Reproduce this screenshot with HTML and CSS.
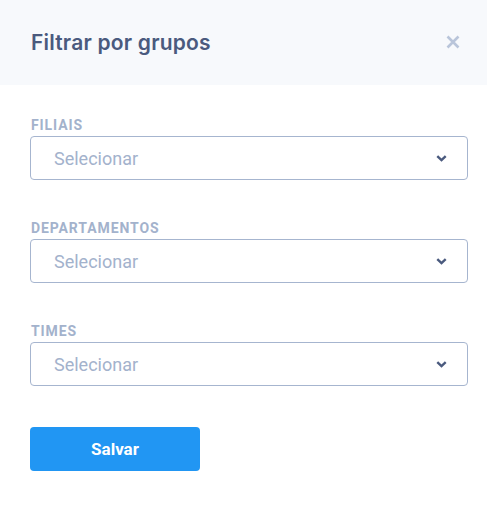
FILE: index.html
```html
<!DOCTYPE html>
<html>
<head>
<meta charset="utf-8">
<link rel="stylesheet" href="styles.css">
</head>
<body>
<div class="modal">
  <div class="header">
    <h2 class="title">Filtrar por grupos</h2>
    <svg class="close" width="14" height="14" viewBox="0 0 14 14"><path d="M1.5 1.5L12.5 12.5M12.5 1.5L1.5 12.5" stroke="#b9c5da" stroke-width="2.6" stroke-linecap="butt"/></svg>
  </div>
  <div class="form">
    <div class="field">
      <label class="label">FILIAIS</label>
      <div class="select"><span class="placeholder">Selecionar</span>
        <svg class="chev" width="11" height="7" viewBox="0 0 11 7"><path d="M1.3 1.2L5.5 5.2L9.7 1.2" fill="none" stroke="#4a5a7e" stroke-width="2.4"/></svg>
      </div>
    </div>
    <div class="field">
      <label class="label">DEPARTAMENTOS</label>
      <div class="select"><span class="placeholder">Selecionar</span>
        <svg class="chev" width="11" height="7" viewBox="0 0 11 7"><path d="M1.3 1.2L5.5 5.2L9.7 1.2" fill="none" stroke="#4a5a7e" stroke-width="2.4"/></svg>
      </div>
    </div>
    <div class="field">
      <label class="label">TIMES</label>
      <div class="select"><span class="placeholder">Selecionar</span>
        <svg class="chev" width="11" height="7" viewBox="0 0 11 7"><path d="M1.3 1.2L5.5 5.2L9.7 1.2" fill="none" stroke="#4a5a7e" stroke-width="2.4"/></svg>
      </div>
    </div>
    <button class="save">Salvar</button>
  </div>
</div>
</body>
</html>
```
FILE: styles.css
```css
html, body {
  margin: 0;
  padding: 0;
  background: #ffffff;
}
.modal {
  width: 487px;
  font-family: Roboto, "Liberation Sans", sans-serif;
}
.header {
  height: 85px;
  background: #f7f9fc;
  display: flex;
  align-items: center;
  justify-content: space-between;
  padding: 0 27px 0 31px;
  box-sizing: border-box;
}
.title {
  margin: 0;
  font-family: Inter, "Open Sans", sans-serif;
  font-weight: 600;
  font-size: 21px;
  color: #4a5a7e;
  letter-spacing: 0.2px;
  padding-bottom: 1px;
}
.close {
  display: block;
  margin-bottom: 1px;
}
.form {
  padding: 32px 19px 0 30px;
}
.field {
  margin-bottom: 40px;
}
.label {
  display: block;
  font-family: Roboto, sans-serif;
  font-weight: 700;
  font-size: 14px;
  line-height: 17px;
  color: #a3b2cc;
  margin: 0 0 2px 1px;
  letter-spacing: 0.9px;
}
.select {
  height: 44px;
  box-sizing: border-box;
  border: 1px solid #a6b5cf;
  border-radius: 4px;
  display: flex;
  align-items: center;
  justify-content: space-between;
  padding: 0 20px 0 23px;
}
.placeholder {
  font-size: 18px;
  color: #a3b2cc;
}
.chev {
  display: block;
}
.save {
  width: 170px;
  height: 44px;
  border: none;
  border-radius: 4px;
  background: #2196f3;
  color: #ffffff;
  font-family: Roboto, sans-serif;
  font-weight: 700;
  font-size: 17px;
  margin-top: 1px;
  padding: 0;
}
```
